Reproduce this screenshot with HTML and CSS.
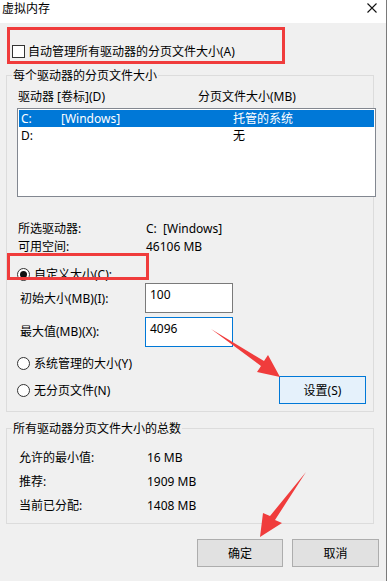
FILE: index.html
```html
<!DOCTYPE html>
<html lang="zh-CN">
<head>
<meta charset="utf-8">
<title>虚拟内存</title>
<link rel="stylesheet" href="styles.css">
</head>
<body>
<div class="window">
  <div class="titlebar">
    <span class="title">虚拟内存</span>
    <svg class="close" width="10" height="10" viewBox="0 0 10 10"><path d="M0.5 0.5 L9.5 9.5 M9.5 0.5 L0.5 9.5" stroke="#111" stroke-width="1.1" fill="none"/></svg>
  </div>

  <div class="auto-row">
    <span class="checkbox"></span>
    <span class="label">自动管理所有驱动器的分页文件大小(A)</span>
  </div>

  <div class="group group-drives">
    <div class="legend">每个驱动器的分页文件大小</div>
    <div class="list-head">
      <span>驱动器 [卷标](D)</span>
      <span>分页文件大小(MB)</span>
    </div>
    <div class="listbox">
      <div class="list-row selected"><span>C:</span><span>[Windows]</span><span>托管的系统</span></div>
      <div class="list-row"><span>D:</span><span></span><span>无</span></div>
    </div>
    <div class="info-row first"><span class="info-label">所选驱动器:</span><span>C:&nbsp;&nbsp;[Windows]</span></div>
    <div class="info-row"><span class="info-label">可用空间:</span><span>46106 MB</span></div>

    <div class="radio-row custom"><span class="radio checked"></span><span>自定义大小(C):</span></div>
    <div class="field-row initial">
      <span class="field-label">初始大小(MB)(I):</span>
      <span class="input">100</span>
    </div>
    <div class="field-row maximum">
      <span class="field-label">最大值(MB)(X):</span>
      <span class="input focused">4096</span>
    </div>
    <div class="radio-row system"><span class="radio"></span><span>系统管理的大小(Y)</span></div>
    <div class="bottom-row">
      <div class="radio-row nofile"><span class="radio"></span><span>无分页文件(N)</span></div>
      <button class="btn btn-set">设置(S)</button>
    </div>
  </div>

  <div class="group group-total">
    <div class="legend">所有驱动器分页文件大小的总数</div>
    <div class="totals">
      <div class="total-row"><span class="total-label">允许的最小值:</span><span>16 MB</span></div>
      <div class="total-row"><span class="total-label">推荐:</span><span>1909 MB</span></div>
      <div class="total-row"><span class="total-label">当前已分配:</span><span>1408 MB</span></div>
    </div>
  </div>

  <div class="actions">
    <button class="btn btn-ok">确定</button>
    <button class="btn btn-cancel">取消</button>
  </div>

  <div class="mark mark-auto"></div>
  <div class="mark mark-custom"></div>
  <svg class="arrows" width="389" height="581" viewBox="0 0 389 581">
    <polygon points="211,329 264,361 268,355 280,377 257,372 261,366" fill="#f03c3c"/>
    <polygon points="306,472 275,520 282,523 260,537 263,513 270,516" fill="#f03c3c"/>
  </svg>
</div>
</body>
</html>
```
FILE: styles.css
```css
html, body {
  margin: 0;
  padding: 0;
  background: #ffffff;
}

.window {
  position: relative;
  width: 386px;
  height: 581px;
  border-right: 1px solid #7a7a7a;
  background: #f0f0f0;
  font-family: "Noto Sans", "Noto Sans CJK SC", sans-serif;
  font-size: 12px;
  color: #000;
  overflow: hidden;
}

.titlebar {
  height: 23px;
  background: #ffffff;
  display: flex;
  justify-content: space-between;
  align-items: flex-start;
}

.title {
  padding-left: 2px;
  line-height: 18px;
}

.close {
  margin: 3px 9px 0 0;
}

.auto-row {
  display: flex;
  align-items: center;
  gap: 3px;
  margin-top: 22px;
  padding-left: 12px;
  height: 13px;
  line-height: 13px;
}

.checkbox {
  width: 13px;
  height: 13px;
  box-sizing: border-box;
  border: 1px solid #333;
  background: #fff;
}

.group {
  border: 1px solid #dcdcdc;
  margin: 0 12px 0 6px;
}

.group-drives {
  margin-top: 17px;
  padding-bottom: 7px;
}

.legend {
  width: max-content;
  margin: -8px 0 0 5px;
  padding: 0 1px;
  line-height: 16px;
  background: #f0f0f0;
}

.list-head {
  display: grid;
  grid-template-columns: 180px auto;
  margin-top: 5px;
  padding-left: 11px;
  line-height: 16px;
}

.listbox {
  width: 359px;
  height: 89px;
  box-sizing: border-box;
  margin: 3px 0 0 10px;
  border: 1px solid #828790;
  background: #fff;
  padding: 1px;
}

.list-row {
  display: grid;
  grid-template-columns: 40px 172px auto;
  height: 17px;
  line-height: 17px;
  padding-left: 2px;
}

.list-row.selected {
  background: #0078d7;
  color: #fff;
}

.info-row {
  display: grid;
  grid-template-columns: 128px auto;
  padding-left: 11px;
  line-height: 18px;
}

.info-row.first {
  margin-top: 23px;
}

.radio-row {
  display: flex;
  align-items: center;
  gap: 4px;
  height: 18px;
  padding-left: 10px;
}

.radio-row.custom {
  margin-top: 9px;
}

.radio-row.system {
  margin-top: 7px;
}

.radio {
  width: 13px;
  height: 13px;
  box-sizing: border-box;
  border: 1px solid #333;
  border-radius: 50%;
  background: #fff;
  display: flex;
  align-items: center;
  justify-content: center;
}

.radio.checked::after {
  content: "";
  width: 7px;
  height: 7px;
  border-radius: 50%;
  background: #111;
}

.field-row {
  display: flex;
  align-items: flex-start;
  padding-left: 13px;
}

.field-row.maximum {
  margin-top: 4px;
}

.field-label {
  width: 125px;
  line-height: 16px;
  padding-top: 8px;
}

.field-row.maximum .field-label {
  padding-top: 7px;
}

.input {
  width: 88px;
  height: 30px;
  box-sizing: border-box;
  border: 1px solid #7a7a7a;
  background: #fff;
  padding: 1px 0 0 4px;
  line-height: 20px;
}

.input.focused {
  border-color: #0078d7;
}

.bottom-row {
  display: flex;
  justify-content: space-between;
  align-items: center;
  height: 28px;
  margin-top: 4px;
  padding-right: 7px;
}

.btn {
  font-family: inherit;
  font-size: 12px;
  color: #000;
  height: 28px;
  box-sizing: border-box;
  padding: 0;
  margin: 0;
  border: 1px solid #adadad;
  background: #e1e1e1;
}

.btn-set {
  width: 87px;
  background: #e5f1fb;
  border-color: #0078d7;
}

.group-total {
  margin-top: 16px;
  padding-bottom: 5px;
}

.totals {
  margin-top: 9px;
}

.total-row {
  display: grid;
  grid-template-columns: 128px auto;
  padding-left: 12px;
  line-height: 24px;
}

.actions {
  display: flex;
  justify-content: flex-end;
  gap: 9px;
  margin-top: 15px;
  padding-right: 7px;
}

.btn-ok {
  width: 86px;
}

.btn-cancel {
  width: 87px;
}

.mark {
  position: absolute;
  box-sizing: border-box;
  border: 3px solid #f03c3c;
}

.mark-auto {
  left: 7px;
  top: 27px;
  width: 278px;
  height: 37px;
}

.mark-custom {
  left: 7px;
  top: 253px;
  width: 142px;
  height: 27px;
}

.arrows {
  position: absolute;
  left: 0;
  top: 0;
  pointer-events: none;
}
```
